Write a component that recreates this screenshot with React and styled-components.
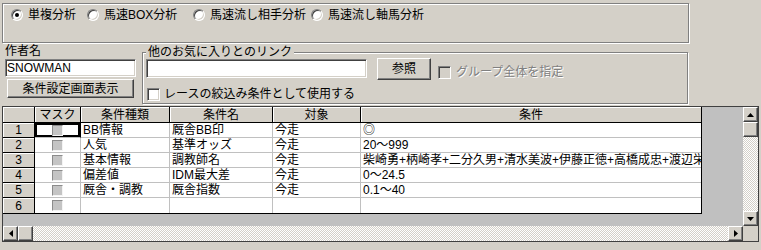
import React from 'react';
import styled, { createGlobalStyle, css } from 'styled-components';

const Global = createGlobalStyle`
  html, body { margin: 0; padding: 0; background: #d4d0c8; }
  body {
    font-family: "Liberation Sans", "Noto Sans CJK JP", sans-serif;
    font-size: 12px;
    color: #000;
  }
  * { box-sizing: border-box; }
`;

const FACE = '#d4d0c8';

const etched = css`
  border: 1px solid #808080;
  box-shadow: inset 1px 1px 0 #fff, 1px 1px 0 #fff;
`;

const sunken = css`
  border: 1px solid;
  border-color: #808080 #fff #fff #808080;
  box-shadow: inset 1px 1px 0 #404040, inset -1px -1px 0 ${FACE};
`;

const raised = css`
  background: ${FACE};
  border: 1px solid;
  border-color: #fff #404040 #404040 #fff;
  box-shadow: inset -1px -1px 0 #808080;
`;

const Window = styled.div`
  width: 761px;
  height: 250px;
  overflow: hidden;
  background: ${FACE};
  display: flex;
  flex-direction: column;
  padding: 3px 0 0 2px;
`;

const OptionGroup = styled.div`
  ${etched};
  width: 687px;
  height: 40px;
  display: flex;
  align-items: flex-start;
  padding: 4px 0 0 8px;
`;

const OptionItem = styled.label`
  display: flex;
  align-items: center;
  gap: 5px;
  width: ${p => (p.$w ? `${p.$w}px` : 'auto')};
  height: 14px;
  line-height: 14px;
  white-space: nowrap;
  flex: none;
`;

const RadioMark = styled.span`
  position: relative;
  flex: none;
  width: 12px;
  height: 12px;
  border-radius: 50%;
  background: #fff;
  border: 1px solid;
  border-color: #808080 #fff #fff #808080;
  box-shadow: inset 1px 1px 0 #404040, inset -1px -1px 0 ${FACE};
  ${p =>
    p.$checked &&
    css`
      &::after {
        content: '';
        position: absolute;
        left: 3px;
        top: 3px;
        width: 4px;
        height: 4px;
        border-radius: 50%;
        background: #000;
      }
    `}
`;

const MiddleRow = styled.div`
  display: flex;
  align-items: flex-start;
`;

const AuthorColumn = styled.div`
  display: flex;
  flex-direction: column;
  margin-left: 3px;
  width: 131px;
`;

const FieldLabel = styled.div`
  line-height: 14px;
  height: 14px;
  margin-top: 1px;
  white-space: nowrap;
`;

const TextBox = styled.input`
  ${sunken};
  background: #fff;
  width: ${p => p.$w}px;
  height: ${p => p.$h}px;
  margin: ${p => p.$m || 0};
  padding: 0 1px;
  font: inherit;
  color: #000;
  line-height: 14px;
  outline: none;
  flex: none;
`;

const PushButton = styled.button`
  ${raised};
  width: ${p => p.$w}px;
  height: ${p => p.$h}px;
  margin: ${p => p.$m || 0};
  padding: 0;
  font: inherit;
  color: #000;
  line-height: 14px;
  white-space: nowrap;
  flex: none;
`;

const LinkGroup = styled.fieldset`
  ${etched};
  margin: 2px 0 0 6px;
  width: 546px;
  height: 59px;
  padding: 0 0 0 3px;
  min-width: 0;
`;

const GroupTitle = styled.legend`
  padding: 0 2px;
  margin: 0;
  line-height: 14px;
  background: ${FACE};
  white-space: nowrap;
`;

const LinkRow = styled.div`
  display: flex;
  align-items: flex-start;
  height: 21px;
`;

const CheckRow = styled.label`
  display: flex;
  align-items: center;
  gap: ${p => p.$gap || 4}px;
  height: 14px;
  line-height: 14px;
  margin: ${p => p.$m || 0};
  white-space: nowrap;
  color: ${p => (p.$disabled ? '#808080' : '#000')};
  text-shadow: ${p => (p.$disabled ? '1px 1px 0 #fff' : 'none')};
  flex: none;
`;

const CheckMark = styled.span`
  flex: none;
  width: 13px;
  height: 13px;
  ${sunken};
  background: ${p => (p.$disabled ? FACE : '#fff')};
`;

const GridFrame = styled.div`
  margin-top: 2px;
  width: 757px;
  height: 136px;
  border: 1px solid #404040;
  display: grid;
  grid-template-columns: 1fr 15px;
  grid-template-rows: 1fr 15px;
  background: #c0c0c0;
`;

const CellArea = styled.div`
  overflow: hidden;
  background: #c0c0c0;
`;

const Table = styled.div`
  display: grid;
  grid-template-columns: 32px 46px 89px 103px 88px 340px;
  grid-template-rows: 16px repeat(6, 15px);
  width: max-content;
  border-right: 1px solid #000;
  border-bottom: 1px solid #000;
  background: #fff;
`;

const FixedCell = styled.div`
  background: ${FACE};
  border-right: ${p => (p.$lastCol ? 'none' : '1px solid #000')};
  border-bottom: ${p => (p.$lastRow ? 'none' : '1px solid #000')};
  box-shadow: inset 1px 1px 0 #fff;
  display: flex;
  align-items: center;
  justify-content: center;
  line-height: 14px;
  white-space: nowrap;
  overflow: hidden;
`;

const DataCell = styled.div`
  background: #fff;
  border-right: ${p => (p.$lastCol ? 'none' : p.$focus ? '1px solid #000' : '1px solid #c0c0c0')};
  border-bottom: ${p => (p.$lastRow ? 'none' : '1px solid #c0c0c0')};
  display: flex;
  align-items: center;
  justify-content: ${p => (p.$center ? 'center' : 'flex-start')};
  padding-left: ${p => (p.$center ? 0 : 2)}px;
  line-height: 14px;
  white-space: nowrap;
  overflow: hidden;
  box-shadow: ${p => (p.$focus ? 'inset 0 0 0 2px #000' : 'none')};
`;

const MaskBox = styled.span`
  width: 11px;
  height: 11px;
  flex: none;
  background: #c4c4c4;
  border: 1px solid;
  border-color: #8c8c8c #f4f4f4 #f4f4f4 #8c8c8c;
`;

const VScroll = styled.div`
  display: flex;
  flex-direction: column;
`;

const HScroll = styled.div`
  display: flex;
  flex-direction: row;
`;

const ScrollButton = styled.div`
  ${raised};
  width: 15px;
  height: 15px;
  flex: none;
  display: flex;
  align-items: center;
  justify-content: center;
`;

const ScrollTrack = styled.div`
  flex: 1;
  background: repeating-conic-gradient(#fff 0 25%, ${FACE} 0 50%) 0 0 / 2px 2px;
`;

const Corner = styled.div`
  background: ${FACE};
`;

const Arrow = ({ dir }) => {
  const pts = {
    up: '0,4 7,4 3.5,0',
    down: '0,0 7,0 3.5,4',
    left: '4,0 4,7 0,3.5',
    right: '0,0 0,7 4,3.5',
  }[dir];
  const vertical = dir === 'up' || dir === 'down';
  return (
    <svg width={vertical ? 7 : 4} height={vertical ? 4 : 7} viewBox={vertical ? '0 0 7 4' : '0 0 4 7'}>
      <polygon points={pts} fill="#000" />
    </svg>
  );
};

const headers = ['', 'マスク', '条件種類', '条件名', '対象', '条件'];
const rows = [
  ['BB情報', '厩舎BB印', '今走', '◎'],
  ['人気', '基準オッズ', '今走', '20～999'],
  ['基本情報', '調教師名', '今走', '柴崎勇+柄崎孝+二分久男+清水美波+伊藤正徳+高橋成忠+渡辺栄+'],
  ['偏差値', 'IDM最大差', '今走', '0～24.5'],
  ['厩舎・調教', '厩舎指数', '今走', '0.1～40'],
  ['', '', '', ''],
];

export default function App() {
  return (
    <>
      <Global />
      <Window>
        <OptionGroup>
          <OptionItem $w={76}><RadioMark $checked />単複分析</OptionItem>
          <OptionItem $w={106}><RadioMark />馬速BOX分析</OptionItem>
          <OptionItem $w={118}><RadioMark />馬速流し相手分析</OptionItem>
          <OptionItem><RadioMark />馬速流し軸馬分析</OptionItem>
        </OptionGroup>

        <MiddleRow>
          <AuthorColumn>
            <FieldLabel>作者名</FieldLabel>
            <TextBox $w={131} $h={18} $m="1px 0 0 0" readOnly value="SNOWMAN" />
            <PushButton $w={127} $h={19} $m="2px 0 0 2px">条件設定画面表示</PushButton>
          </AuthorColumn>

          <LinkGroup>
            <GroupTitle>他のお気に入りとのリンク</GroupTitle>
            <LinkRow>
              <TextBox $w={221} $h={19} readOnly value="" />
              <PushButton $w={54} $h={22} $m="-1px 0 0 10px">参照</PushButton>
              <CheckRow $disabled $gap={5} $m="6px 0 0 7px">
                <CheckMark $disabled />
                グループ全体を指定
              </CheckRow>
            </LinkRow>
            <CheckRow $m="7px 0 0 1px">
              <CheckMark />
              レースの絞込み条件として使用する
            </CheckRow>
          </LinkGroup>
        </MiddleRow>

        <GridFrame>
          <CellArea>
            <Table>
              {headers.map((h, i) => (
                <FixedCell key={`h${i}`} $lastCol={i === headers.length - 1}>{h}</FixedCell>
              ))}
              {rows.map((r, ri) => {
                const lastRow = ri === rows.length - 1;
                return (
                  <React.Fragment key={ri}>
                    <FixedCell $lastRow={lastRow}>{ri + 1}</FixedCell>
                    <DataCell $center $lastRow={lastRow} $focus={ri === 0}>
                      <MaskBox />
                    </DataCell>
                    {r.map((c, ci) => (
                      <DataCell key={ci} $lastRow={lastRow} $lastCol={ci === r.length - 1}>
                        {c}
                      </DataCell>
                    ))}
                  </React.Fragment>
                );
              })}
            </Table>
          </CellArea>
          <VScroll>
            <ScrollButton><Arrow dir="up" /></ScrollButton>
            <ScrollButton />
            <ScrollTrack />
            <ScrollButton><Arrow dir="down" /></ScrollButton>
          </VScroll>
          <HScroll>
            <ScrollButton><Arrow dir="left" /></ScrollButton>
            <ScrollButton />
            <ScrollTrack />
            <ScrollButton><Arrow dir="right" /></ScrollButton>
          </HScroll>
          <Corner />
        </GridFrame>
      </Window>
    </>
  );
}
